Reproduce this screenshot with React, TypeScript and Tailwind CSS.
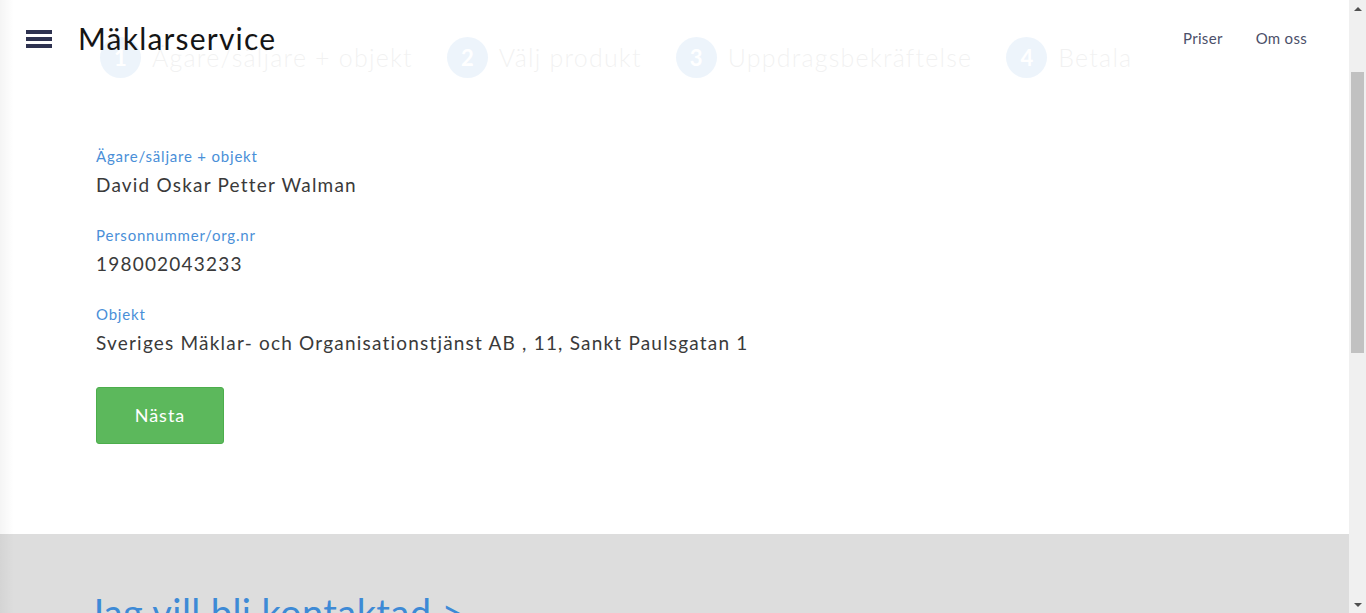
import React from "react";

const steps = [
  { n: "1", label: "Ägare/säljare + objekt" },
  { n: "2", label: "Välj produkt" },
  { n: "3", label: "Uppdragsbekräftelse" },
  { n: "4", label: "Betala" },
];

function Field({ label, value, first }: { label: string; value: string; first?: boolean }) {
  return (
    <div className={first ? "" : "mt-[26px]"}>
      <div className="text-[15px] leading-[20px] text-[#4a8fd8] tracking-[0.8px]">{label}</div>
      <div className="mt-[5px] text-[19px] leading-[28px] text-[#3a3a3a] tracking-[1.2px]">{value}</div>
    </div>
  );
}

export default function App() {
  return (
    <div
      className="h-[613px] w-[1366px] overflow-hidden flex bg-white"
      style={{ fontFamily: "Lato, 'Noto Sans', sans-serif" }}
    >
      <div className="relative flex-1 flex flex-col">
        {/* step bar (under the header) */}
        <div className="shrink-0 flex items-center pt-[37px] pl-[100px] h-[41px] box-content">
          {steps.map((s, i) => (
            <div key={s.n} className={`flex items-center ${i > 0 ? "ml-[34px]" : ""}`}>
              <div className="w-[41px] h-[41px] rounded-full bg-[#4a90d9] flex items-center justify-center text-white text-[22px] font-bold">
                {s.n}
              </div>
              <div className="ml-[11px] text-[25px] text-[#777] font-light tracking-[1.2px]">{s.label}</div>
            </div>
          ))}
        </div>

        {/* header overlay */}
        <div className="absolute top-0 left-0 right-0 h-[92px] bg-white/90 flex items-start">
          <div className="flex items-center pt-[30px] pl-[26px]">
            <div className="flex flex-col gap-[3px] w-[26px]">
              <div className="h-[4px] bg-[#2e3250]" />
              <div className="h-[4px] bg-[#2e3250]" />
              <div className="h-[4px] bg-[#2e3250]" />
            </div>
          </div>
          <div className="ml-[26px] pt-[19px] text-[30px] leading-[38px] text-[#151515] tracking-[1.2px]">
            Mäklarservice
          </div>
          <div className="ml-auto flex gap-[33px] pt-[27px] pr-[42px] text-[15px] text-[#4b4f69] tracking-[0.3px]">
            <span>Priser</span>
            <span>Om oss</span>
          </div>
        </div>

        {/* content */}
        <div className="shrink-0 pl-[96px] pt-[68px] h-[456px]">
          <Field first label="Ägare/säljare + objekt" value="David Oskar Petter Walman" />
          <Field label="Personnummer/org.nr" value="198002043233" />
          <Field label="Objekt" value="Sveriges Mäklar- och Organisationstjänst AB , 11, Sankt Paulsgatan 1" />
          <button className="mt-[30px] w-[128px] h-[57px] rounded-[3px] bg-[#5cb85c] border border-[#4cae4c] text-white text-[18px] tracking-[1px]">
            Nästa
          </button>
        </div>

        {/* footer */}
        <div className="flex-1 bg-[#dddddd] pl-[88px] pt-[56px]">
          <div className="text-[38px] leading-[44px] text-[#3d8ad6] tracking-[0.4px] whitespace-nowrap">Jag vill bli kontaktad &gt;</div>
        </div>

        {/* left edge shade */}
        <div className="pointer-events-none absolute top-0 bottom-0 left-0 w-[14px] bg-gradient-to-r from-black/[0.04] to-transparent" />
      </div>

      {/* scrollbar */}
      <div className="w-[17px] bg-[#f0f0f0] flex flex-col items-center">
        <div className="h-[17px] flex items-center justify-center">
          <div className="w-0 h-0 border-l-[4px] border-r-[4px] border-b-[4px] border-l-transparent border-r-transparent border-b-[#505050]" />
        </div>
        <div className="mt-[55px] w-[13px] h-[281px] bg-[#c1c1c1]" />
        <div className="mt-auto h-[17px] flex items-center justify-center">
          <div className="w-0 h-0 border-l-[4px] border-r-[4px] border-t-[4px] border-l-transparent border-r-transparent border-t-[#505050]" />
        </div>
      </div>
    </div>
  );
}
